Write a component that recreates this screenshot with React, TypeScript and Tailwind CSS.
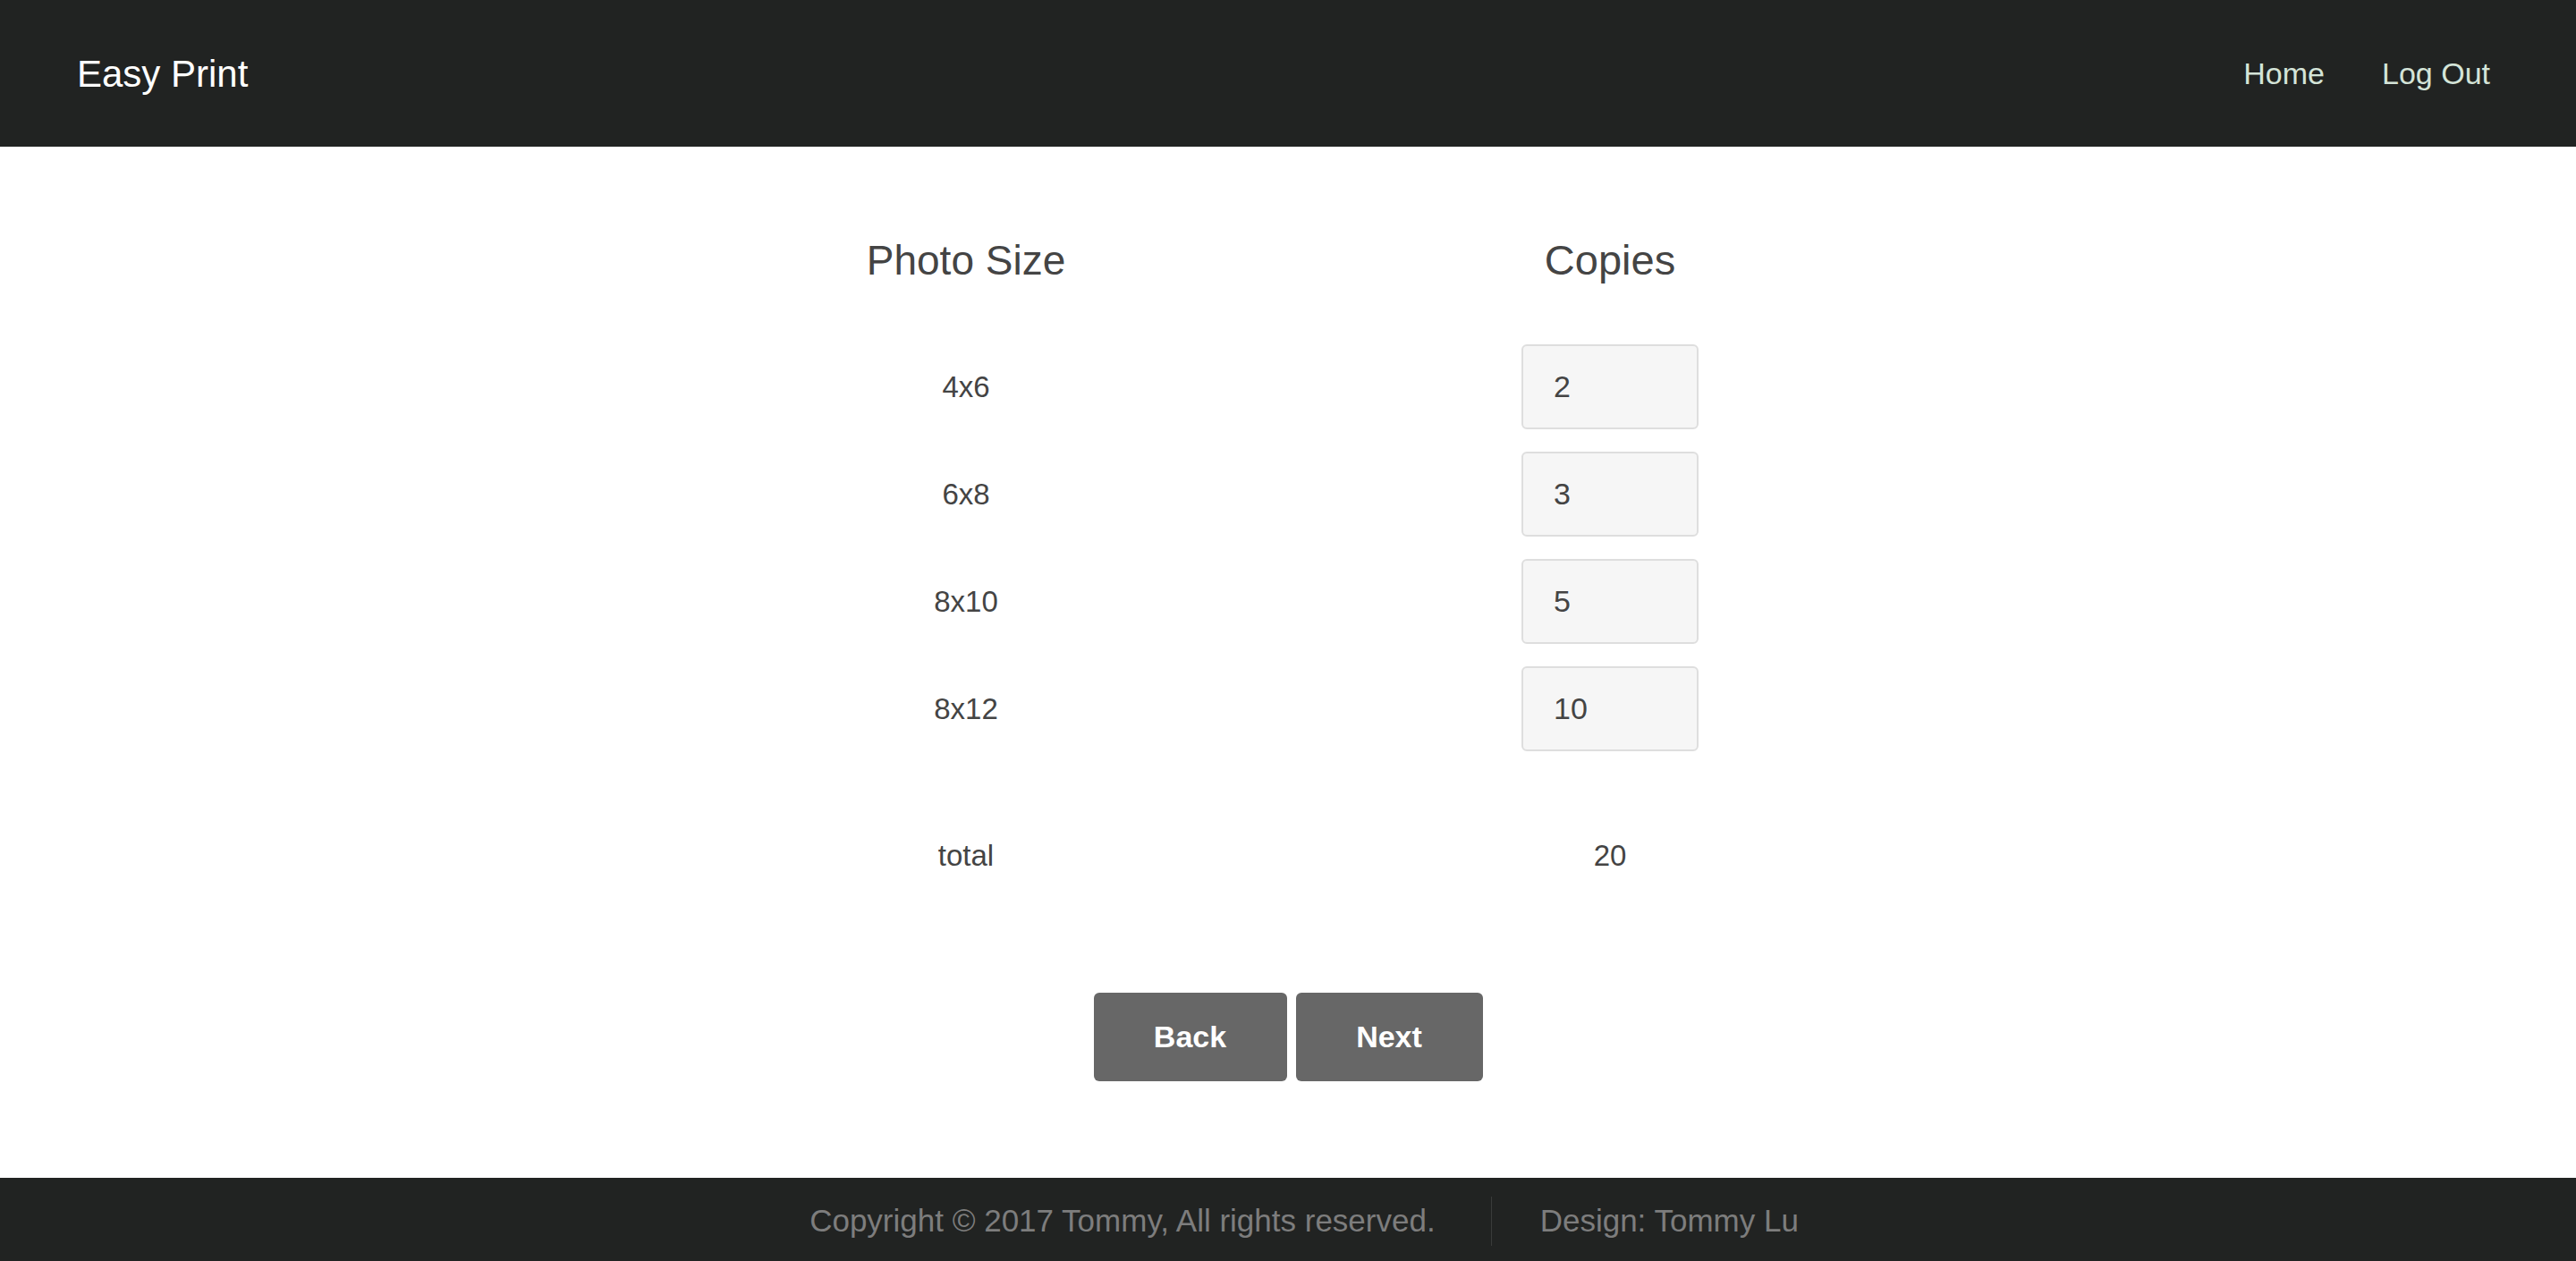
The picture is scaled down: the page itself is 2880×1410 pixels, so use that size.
import { useState } from "react";

const sizes = [
  { label: "4x6", copies: 2 },
  { label: "6x8", copies: 3 },
  { label: "8x10", copies: 5 },
  { label: "8x12", copies: 10 },
];

function Header() {
  return (
    <header className="flex h-[164px] items-center justify-between bg-[#212322] pl-[86px] pr-[96px]">
      <a href="#" className="text-[42px] text-white">
        Easy Print
      </a>
      <nav className="flex items-center gap-[64px] text-[34px] text-[#d4e4d8]">
        <a href="#">Home</a>
        <a href="#">Log Out</a>
      </nav>
    </header>
  );
}

function Footer() {
  return (
    <footer className="flex h-[93px] items-center justify-center bg-[#212322] pl-[36px] pt-[4px] text-[35px] text-[#7d7d7d]">
      <span className="pr-[62px]">Copyright © 2017 Tommy, All rights reserved.</span>
      <span className="h-[55px] w-px bg-[#3a3b3a]" />
      <span className="pl-[54px]">Design: Tommy Lu</span>
    </footer>
  );
}

export default function App() {
  const [rows, setRows] = useState(sizes);
  const total = rows.reduce((sum, r) => sum + (Number(r.copies) || 0), 0);

  return (
    <div className="flex min-h-screen flex-col bg-white font-['Liberation_Sans',Arial,sans-serif]">
      <Header />

      <main className="flex flex-1 flex-col items-center pt-[77px] text-[#444]">
        <div className="grid w-[1440px] grid-cols-2">
          <div className="flex h-[100px] items-center justify-center text-[46px]">Photo Size</div>
          <div className="flex h-[100px] items-center justify-center text-[47px]">Copies</div>
        </div>

        <div className="mt-[44px] flex w-[1440px] flex-col gap-[25px]">
          {rows.map((r, i) => (
            <div key={r.label} className="grid h-[95px] grid-cols-2">
              <div className="flex items-center justify-center text-[33px]">{r.label}</div>
              <div className="flex items-center justify-center">
                <input
                  type="text"
                  value={r.copies}
                  onChange={(e) => {
                    const next = [...rows];
                    next[i] = { ...r, copies: Number(e.target.value) || 0 };
                    setRows(next);
                  }}
                  className="h-[95px] w-[198px] rounded-[6px] border-2 border-[#dedede] bg-[#f6f6f6] pl-[34px] text-[34px] text-[#444] outline-none"
                />
              </div>
            </div>
          ))}
        </div>

        <div className="mt-[69px] grid h-[95px] w-[1440px] grid-cols-2 text-[33px]">
          <div className="flex items-center justify-center">total</div>
          <div className="flex items-center justify-center">{total}</div>
        </div>

        <div className="mt-[106px] flex gap-[10px]">
          <button className="h-[99px] w-[216px] rounded-[6px] bg-[#676767] text-[34px] font-semibold text-white">
            Back
          </button>
          <button className="h-[99px] w-[209px] rounded-[6px] bg-[#676767] text-[34px] font-semibold text-white">
            Next
          </button>
        </div>
      </main>

      <Footer />
    </div>
  );
}
